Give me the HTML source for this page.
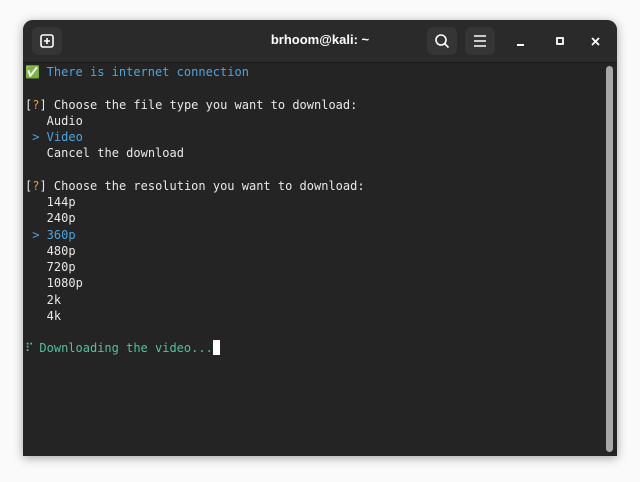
<!DOCTYPE html>
<html><head><style>
body{margin:0;width:640px;height:482px;background:#fafafa;position:relative;overflow:hidden}
.win{position:absolute;left:23px;top:20px;width:594px;height:436px;background:#242424;border-radius:10px 10px 0 0;box-shadow:0 2px 10px rgba(0,0,0,.35);overflow:hidden}
.hdr{position:absolute;left:0;top:0;width:594px;height:42px;background:#2a2a2a;border-bottom:1px solid #1a1a1a}
.btn{position:absolute;top:7px;width:30px;height:28px;background:#353535;border-radius:6px}
.title{position:absolute;left:0;right:0;top:12px;text-align:center;color:#fff;font:bold 13px "Liberation Sans",sans-serif}
pre{position:absolute;left:2px;top:44px;margin:0;font:12px/16.25px "DejaVu Sans Mono","Liberation Mono",monospace;color:#e8e8e8}
.b{color:#4fa3dc}.o{color:#e5a03a}.g{color:#52c0a0}
.sp{display:inline-block;width:7.2px;overflow:hidden;vertical-align:bottom}
.sb{position:absolute;left:583px;top:46px;width:7px;height:386px;background:#a8a8a8;border-radius:4px}
.cur{display:inline-block;width:7px;height:15px;background:#fff;vertical-align:-3px}
</style></head><body>
<div class="win">
<div class="hdr">
<div class="btn" style="left:9px"><svg width="30" height="28"><rect x="9" y="8" width="12" height="12" rx="2" fill="none" stroke="#fff" stroke-width="1.6"/><path d="M15 11v6M12 14h6" stroke="#fff" stroke-width="1.6"/></svg></div>
<div class="title">brhoom@kali: ~</div>
<div class="btn" style="left:404px"><svg width="30" height="28"><circle cx="14" cy="13" r="5" fill="none" stroke="#fff" stroke-width="1.6"/><path d="M17.5 16.5l4 4" stroke="#fff" stroke-width="1.7"/></svg></div>
<div class="btn" style="left:442px"><svg width="30" height="28"><path d="M9 9h12M9 14h12M9 19h12" stroke="#fff" stroke-width="1.6"/></svg></div>
<svg style="position:absolute;left:490px;top:12px" width="100" height="20"><path d="M4 13h7" stroke="#fff" stroke-width="2"/><rect x="44" y="6" width="6" height="6" fill="none" stroke="#fff" stroke-width="1.8"/><path d="M79 6l7 7M86 6l-7 7" stroke="#fff" stroke-width="1.8"/></svg>
</div>
<pre><span class="sp" style="width:14.4px;color:#5fc35f">✅</span> <span class="b">There is internet connection</span>

[<span class="o">?</span>] Choose the file type you want to download:
   Audio
 <span class="b">&gt; Video</span>
   Cancel the download

[<span class="o">?</span>] Choose the resolution you want to download:
   144p
   240p
 <span class="b">&gt; 360p</span>
   480p
   720p
   1080p
   2k
   4k

<span class="g"><span class="sp">⠏</span> Downloading the video...</span><span class="cur"></span></pre>
<div class="sb"></div>
</div>
</body></html>
